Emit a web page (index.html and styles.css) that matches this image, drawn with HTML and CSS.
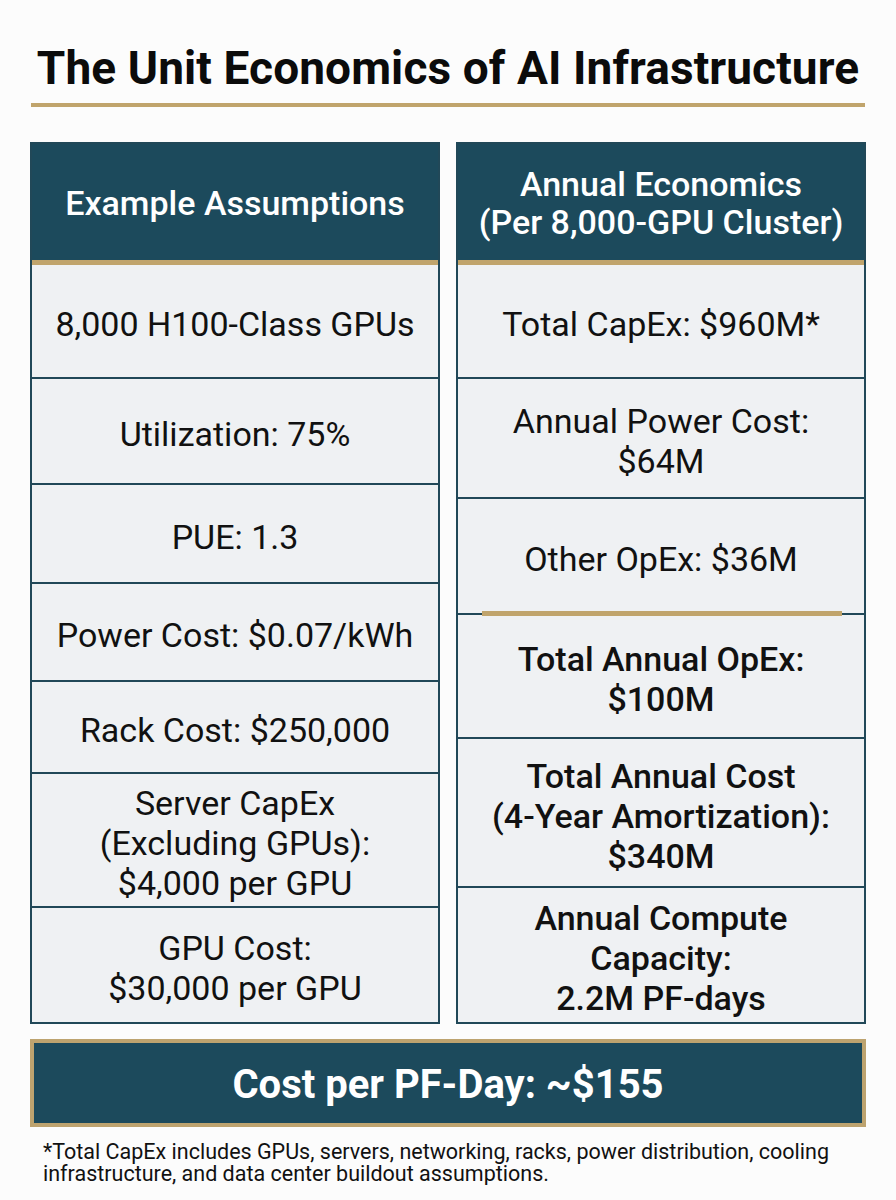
FILE: index.html
```html
<!DOCTYPE html>
<html lang="en">
<head>
<meta charset="utf-8">
<title>The Unit Economics of AI Infrastructure</title>
<link rel="stylesheet" href="styles.css">
</head>
<body>
<main class="page">
  <h1 class="title">The Unit Economics of AI Infrastructure</h1>
  <div class="rule"></div>

  <section class="columns">
    <div class="col col-left">
      <div class="col-head">Example Assumptions</div>
      <div class="cell">8,000 H100-Class GPUs</div>
      <div class="cell">Utilization: 75%</div>
      <div class="cell">PUE: 1.3</div>
      <div class="cell">Power Cost: $0.07/kWh</div>
      <div class="cell">Rack Cost: $250,000</div>
      <div class="cell">Server CapEx<br>(Excluding GPUs):<br>$4,000 per GPU</div>
      <div class="cell">GPU Cost:<br>$30,000 per GPU</div>
    </div>

    <div class="col col-right">
      <div class="col-head">Annual Economics<br>(Per 8,000-GPU Cluster)</div>
      <div class="cell">Total CapEx: $960M*</div>
      <div class="cell">Annual Power Cost:<br>$64M</div>
      <div class="cell">Other OpEx: $36M</div>
      <div class="cell cell-strong cell-gold">Total Annual OpEx:<br>$100M</div>
      <div class="cell cell-strong">Total Annual Cost<br>(4-Year Amortization):<br>$340M</div>
      <div class="cell cell-strong">Annual Compute<br>Capacity:<br>2.2M PF-days</div>
    </div>
  </section>

  <div class="banner">Cost per PF-Day: ~$155</div>

  <p class="footnote">*Total CapEx includes GPUs, servers, networking, racks, power distribution, cooling infrastructure, and data center buildout assumptions.</p>
</main>
</body>
</html>
```

FILE: styles.css
```css
* { box-sizing: border-box; }

html, body {
  margin: 0;
  padding: 0;
  background: #fcfcfc;
}

body {
  font-family: Roboto, "Liberation Sans", Arial, sans-serif;
  color: #111111;
}

.page {
  width: 896px;
  padding: 41px 30px 0 30px;
}

.title {
  margin: 0;
  font-size: 46px;
  line-height: 54px;
  font-weight: 700;
  text-align: center;
  color: #0b0b0b;
  letter-spacing: 0.1px;
}

.rule {
  height: 4px;
  margin: 8px 1px 0 1px;
  background: #c0a46c;
}

.columns {
  display: grid;
  grid-template-columns: 1fr 1fr;
  column-gap: 16px;
  margin-top: 35px;
}

.col {
  display: flex;
  flex-direction: column;
  border: 2px solid #214858;
  background: #eff1f3;
}

.col-head {
  height: 121px;
  display: flex;
  align-items: center;
  justify-content: center;
  text-align: center;
  background: #1c4a5c;
  color: #ffffff;
  font-size: 34px;
  font-weight: 500;
  line-height: 38px;
  border-bottom: 5px solid #c0a46c;
  padding-top: 2px;
}

.cell {
  position: relative;
  display: flex;
  align-items: center;
  justify-content: center;
  text-align: center;
  font-size: 34px;
  line-height: 40px;
  font-weight: 400;
  color: #111111;
  border-bottom: 2px solid #214858;
  padding-top: 6px;
}

.cell:last-child { border-bottom: none; }

.cell-strong { font-weight: 500; }

.col-left .cell:nth-child(2) { height: 114px; }
.col-left .cell:nth-child(3) { height: 106px; }
.col-left .cell:nth-child(4) { height: 99px; }
.col-left .cell:nth-child(5) { height: 98px; }
.col-left .cell:nth-child(6) { height: 92px; }
.col-left .cell:nth-child(7) { height: 134px; }
.col-left .cell:nth-child(8) { height: 114px; }

.col-right .cell:nth-child(2) { height: 114px; }
.col-right .cell:nth-child(3) { height: 120px; }
.col-right .cell:nth-child(4) { height: 116px; }
.col-right .cell:nth-child(5) { height: 124px; }
.col-right .cell:nth-child(6) { height: 149px; }
.col-right .cell:nth-child(7) { height: 134px; }

.cell-gold::before {
  content: "";
  position: absolute;
  top: -4px;
  left: 24px;
  right: 22px;
  height: 5px;
  background: #c0a46c;
}

.banner {
  margin-top: 15px;
  height: 88px;
  display: flex;
  align-items: center;
  justify-content: center;
  background: #1c4a5c;
  border: 4px solid #bda36f;
  color: #ffffff;
  font-size: 40px;
  font-weight: 700;
  padding-top: 2px;
}

.footnote {
  margin: 14px 0 0 0;
  padding: 0 30px 0 13px;
  font-size: 21.5px;
  line-height: 22px;
  color: #111111;
}
```
